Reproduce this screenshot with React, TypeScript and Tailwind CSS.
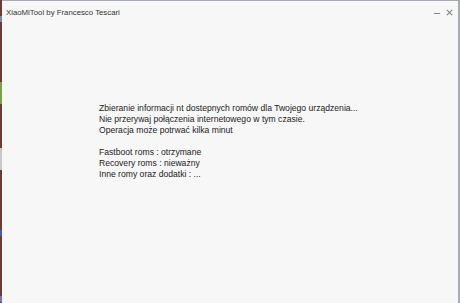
export default function App() {
  return (
    <div className="flex h-[303px] w-[460px] overflow-hidden bg-[#f7f7f7] font-['Liberation_Sans',Arial,sans-serif] text-[#222]">
      <div className="flex w-[2px] flex-col bg-[#6e3b33]">
        <div className="mt-[16px] h-[6px] bg-[#7a8aa0]" />
        <div className="mt-[60px] h-[22px] bg-[#7aa04a]" />
        <div className="mt-[44px] h-[22px] bg-[#c8c8c8]" />
        <div className="mt-[60px] h-[6px] bg-[#4a5ab0]" />
        <div className="mt-[60px] h-[6px] bg-[#6a7ab0]" />
      </div>
      <div className="flex flex-1 flex-col border-t border-r-2 border-[#a9acb3]">
        <div className="flex h-[22px] items-center justify-between pl-[4px] pr-[5px] text-[7.8px] text-[#333]">
          <span className="mt-[2px]">XiaoMiTool by Francesco Tescari</span>
          <div className="flex items-center gap-[6px]">
            <span className="mt-[3px] block h-[1px] w-[6px] bg-[#888]" />
            <svg width="7" height="7" viewBox="0 0 7 7" className="mt-[1px]">
              <path d="M0.8 0.8L6.2 6.2M6.2 0.8L0.8 6.2" stroke="#888" strokeWidth="1.2" />
            </svg>
          </div>
        </div>
        <div className="flex flex-1 flex-col pl-[97px] pt-[80px] text-[8.6px] leading-[11px]">
          <p>Zbieranie informacji nt dostepnych romów dla Twojego urządzenia...</p>
          <p>Nie przerywaj połączenia internetowego w tym czasie.</p>
          <p>Operacja może potrwać kilka minut</p>
          <p className="h-[11px]" />
          <p>Fastboot roms : otrzymane</p>
          <p>Recovery roms : nieważny</p>
          <p>Inne romy oraz dodatki : ...</p>
        </div>
      </div>
    </div>
  );
}
